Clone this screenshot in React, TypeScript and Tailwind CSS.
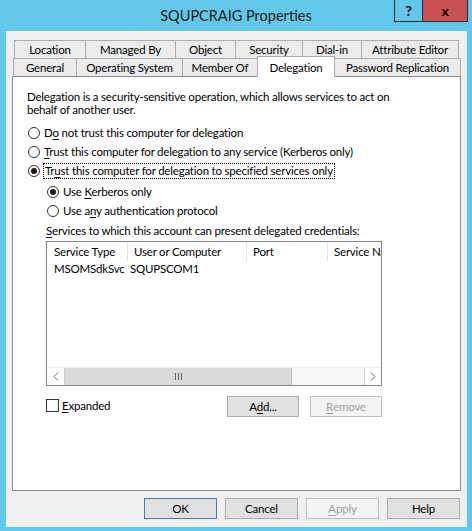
import { FC, ReactNode } from "react";

type Tab = { label: string; w: string };

const topRow: Tab[] = [
  { label: "Location", w: "w-[71px]" },
  { label: "Managed By", w: "w-[90px]" },
  { label: "Object", w: "w-[60px]" },
  { label: "Security", w: "w-[67px]" },
  { label: "Dial-in", w: "w-[59px]" },
  { label: "Attribute Editor", w: "w-[98px] border-r" },
];

const Mn: FC<{ children: ReactNode }> = ({ children }) => (
  <span className="underline underline-offset-[2px] decoration-1">{children}</span>
);

const Radio: FC<{ checked?: boolean }> = ({ checked }) => (
  <span className="w-[12px] h-[12px] rounded-full border border-[#333] bg-white flex items-center justify-center shrink-0">
    {checked && <span className="w-[6px] h-[6px] rounded-full bg-[#1a1a1a]" />}
  </span>
);

const Button: FC<{ children: ReactNode; disabled?: boolean; focus?: boolean; w?: string }> = ({
  children,
  disabled,
  focus,
  w = "w-[73px]",
}) => (
  <div
    className={
      disabled
        ? `${w} h-[21px] border border-[#bfbfbf] bg-[#f4f4f4] text-[#a0a0a0] flex items-center justify-center`
        : focus
        ? `${w} h-[21px] border border-[#3c7fb1] bg-[#e1e1e1] text-black flex items-center justify-center`
        : `${w} h-[21px] border border-[#adadad] bg-[#e1e1e1] text-black flex items-center justify-center`
    }
  >
    {children}
  </div>
);

const App: FC = () => {
  return (
    <div className="w-[472px] h-[531px] bg-[#62c8ea] flex flex-col font-['Lato','Liberation_Sans',Arial,sans-serif] text-[11.5px] tracking-[-0.2px] text-black">
      {/* title bar */}
      <div className="h-[31px] flex">
        <div className="w-[78px]" />
        <div className="flex-1 flex items-center justify-center text-[14.5px] tracking-normal text-[#1a1a1a] pt-[1px]">
          SQUPCRAIG Properties
        </div>
        <div className="w-[78px] flex items-start">
          <div className="w-[29px] h-[22px] border border-[#2b2b2b] border-t-0 flex items-center justify-center font-bold text-[14px]">
            ?
          </div>
          <div className="w-[45px] h-[22px] bg-[#c75050] border border-[#2b2b2b] border-t-0 border-l-0 flex items-center justify-center font-bold text-[14px]">
            x
          </div>
        </div>
      </div>

      {/* client */}
      <div className="ml-[6px] mr-[5px] mb-[4px] flex-1 bg-[#f0f0f0] flex flex-col">
        {/* tabs */}
        <div className="mt-[9px] h-[36px] flex flex-col">
          <div className="ml-[8px] h-[18px] flex">
            {topRow.map((t) => (
              <div
                key={t.label}
                className={`${t.w} h-[18px] border-l border-t border-[#acacac] bg-[#ebebeb] flex items-center justify-center`}
              >
                {t.label}
              </div>
            ))}
          </div>
          <div className="ml-[7px] h-[18px] flex items-end">
            <div className="w-[63px] h-[18px] border-l border-t border-[#acacac] bg-[#ebebeb] flex items-center justify-center">
              General
            </div>
            <div className="w-[106px] h-[18px] border-l border-t border-[#acacac] bg-[#ebebeb] flex items-center justify-center">
              Operating System
            </div>
            <div className="w-[75px] h-[18px] border-l border-t border-[#acacac] bg-[#ebebeb] flex items-center justify-center">
              Member Of
            </div>
            <div className="relative z-10 w-[78px] h-[21px] -mb-[1px] border-l border-t border-r border-[#acacac] bg-white flex items-start justify-center pt-[2px]">
              Delegation
            </div>
            <div className="w-[126px] h-[18px] border-t border-r border-[#acacac] bg-[#ebebeb] flex items-center justify-center">
              Password Replication
            </div>
          </div>
        </div>

        {/* panel */}
        <div className="mx-[6px] h-[415px] bg-white border border-[#898c95] pl-[14px] pt-[13px] flex flex-col">
          <p className="leading-[13px] w-[370px]">
            Delegation is a security-sensitive operation, which allows services to act on behalf of another user.
          </p>

          <div className="mt-[7px] flex flex-col">
            <label className="h-[19px] flex items-center gap-[4px] ml-[1px]">
              <Radio />
              <span>
                D<Mn>o</Mn> not trust this computer for delegation
              </span>
            </label>
            <label className="h-[19px] flex items-center gap-[4px] ml-[1px]">
              <Radio />
              <span>
                <Mn>T</Mn>rust this computer for delegation to any service (Kerberos only)
              </span>
            </label>
            <label className="h-[19px] flex items-center gap-[3px] ml-[1px]">
              <Radio checked />
              <span className="border border-dotted border-black px-[1px] leading-[14px]">
                Tr<Mn>u</Mn>st this computer for delegation to specified services only
              </span>
            </label>
            <div className="mt-[2px] ml-[20px] flex flex-col">
              <label className="h-[19px] flex items-center gap-[4px]">
                <Radio checked />
                <span>
                  Use <Mn>K</Mn>erberos only
                </span>
              </label>
              <label className="h-[19px] flex items-center gap-[4px]">
                <Radio />
                <span>
                  Use a<Mn>n</Mn>y authentication protocol
                </span>
              </label>
            </div>
          </div>

          <div className="ml-[19px] mt-[4px] w-[336px] flex flex-col">
            <div className="leading-[13px] whitespace-nowrap">
              <Mn>S</Mn>ervices to which this account can present delegated credentials:
            </div>

            {/* list view */}
            <div className="mt-[4px] h-[145px] border border-[#828790] bg-white flex flex-col">
              <div className="h-[20px] flex overflow-hidden whitespace-nowrap">
                <div className="w-[81px] shrink-0 border-r border-[#e5e5e5] pl-[7px] flex items-center">Service Type</div>
                <div className="w-[119px] shrink-0 border-r border-[#e5e5e5] pl-[6px] flex items-center">User or Computer</div>
                <div className="w-[81px] shrink-0 border-r border-[#e5e5e5] pl-[6px] flex items-center">Port</div>
                <div className="flex-1 min-w-0 overflow-hidden pl-[6px] flex items-center">Service Name</div>
              </div>
              <div className="h-[14px] flex items-center whitespace-nowrap">
                <div className="w-[83px] shrink-0 pl-[7px]">MSOMSdkSvc</div>
                <div className="shrink-0">SQUPSCOM1</div>
              </div>
              <div className="flex-1" />
              {/* horizontal scrollbar */}
              <div className="h-[18px] flex bg-[#f7f7f7] border-t border-[#f0f0f0]">
                <div className="w-[18px] bg-white border-r border-[#d0d0d0] flex items-center justify-center">
                  <svg width="6" height="9" viewBox="0 0 6 9">
                    <path d="M5 0.5 L1 4.5 L5 8.5" fill="none" stroke="#606060" strokeWidth="1" />
                  </svg>
                </div>
                <div className="w-[227px] bg-[#d9d9d9] border-r border-[#c2c2c2] flex items-center justify-center">
                  <div className="flex gap-[2px]">
                    <span className="w-[1px] h-[7px] bg-[#606060]" />
                    <span className="w-[1px] h-[7px] bg-[#606060]" />
                    <span className="w-[1px] h-[7px] bg-[#606060]" />
                  </div>
                </div>
                <div className="flex-1" />
                <div className="w-[17px] bg-white border-l border-[#d0d0d0] flex items-center justify-center">
                  <svg width="6" height="9" viewBox="0 0 6 9">
                    <path d="M1 0.5 L5 4.5 L1 8.5" fill="none" stroke="#606060" strokeWidth="1" />
                  </svg>
                </div>
              </div>
            </div>

            <div className="mt-[10px] flex items-start">
              <label className="flex items-center gap-[3px] mt-[1px]">
                <span className="w-[13px] h-[13px] border border-[#333] bg-white" />
                <span>
                  <Mn>E</Mn>xpanded
                </span>
              </label>
              <div className="flex-1" />
              <div className="flex gap-[11px]">
                <Button w="w-[72px]">
                  A<Mn>d</Mn>d...
                </Button>
                <Button w="w-[72px]" disabled>
                  <Mn>R</Mn>emove
                </Button>
              </div>
            </div>
          </div>
        </div>

        {/* dialog buttons */}
        <div className="mt-[7px] mr-[7px] flex justify-end gap-[8px]">
          <Button focus>OK</Button>
          <Button>Cancel</Button>
          <Button disabled>
            <Mn>A</Mn>pply
          </Button>
          <Button>Help</Button>
        </div>
      </div>
    </div>
  );
};

export default App;
